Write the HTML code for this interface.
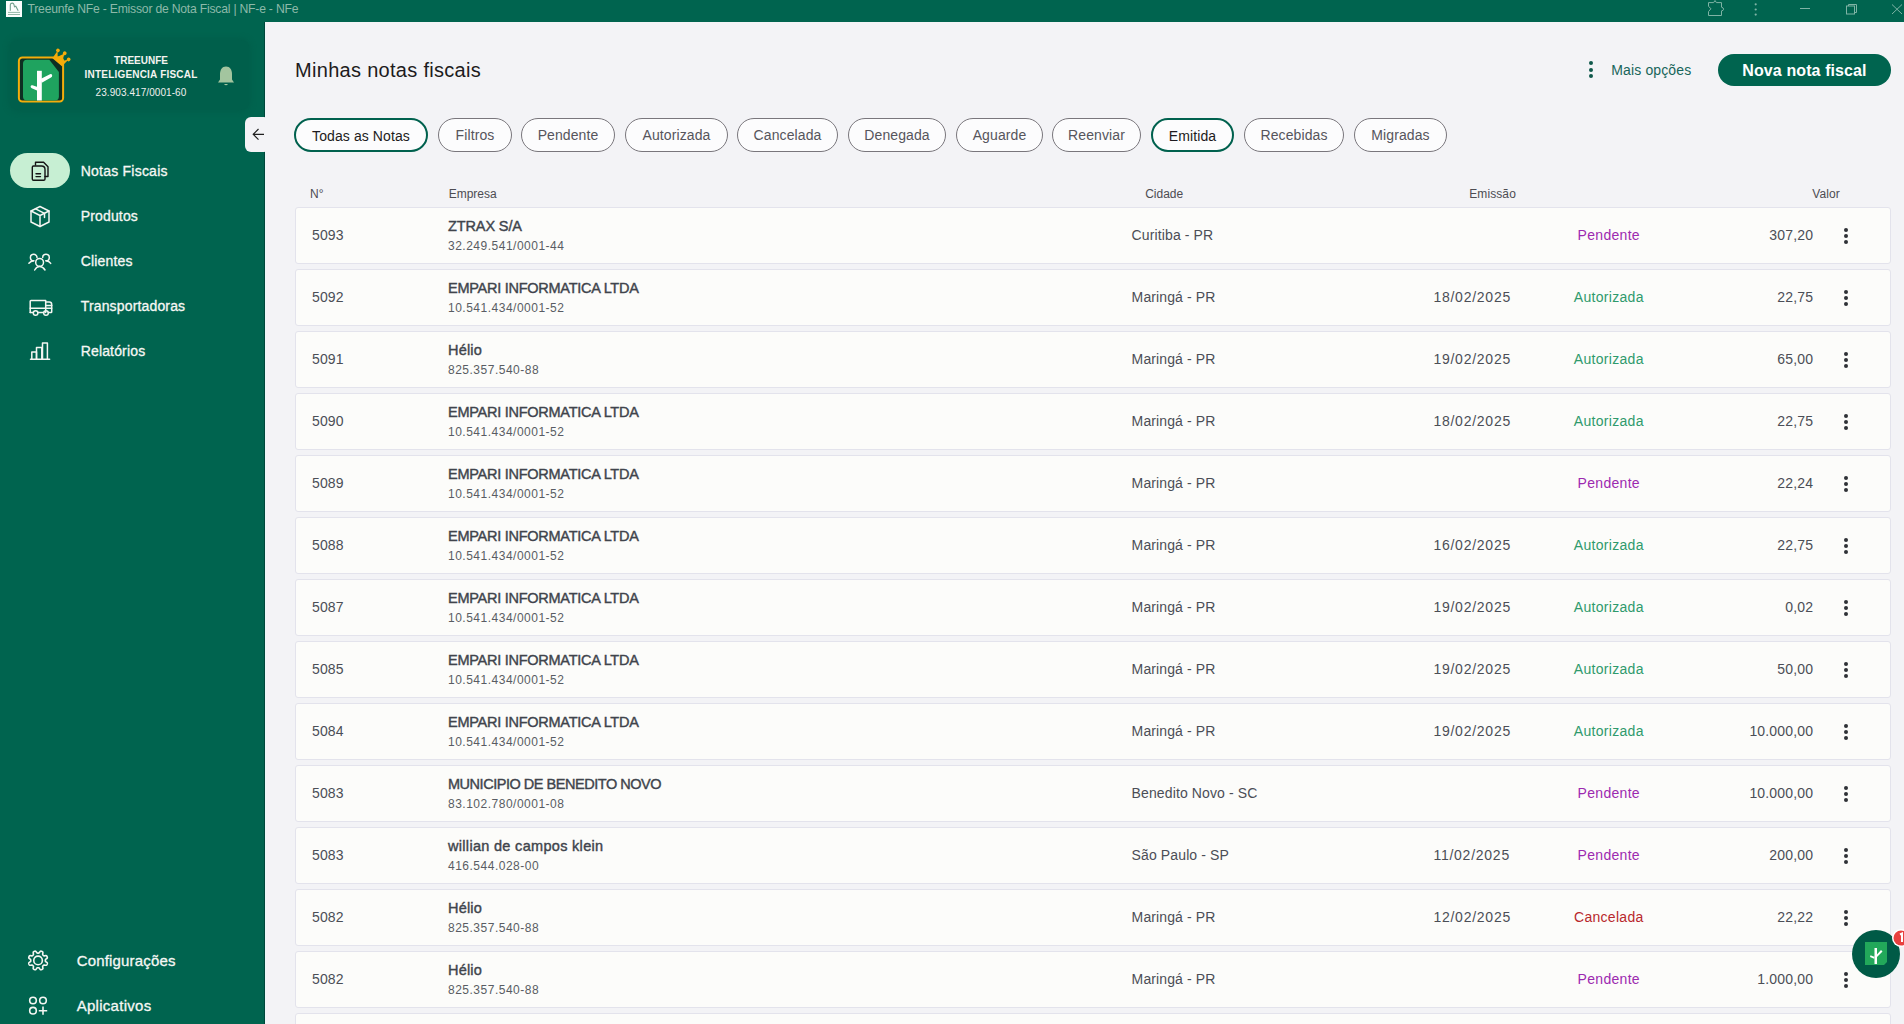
<!DOCTYPE html>
<html><head><meta charset="utf-8"><title>Treeunfe NFe</title>
<style>
*{margin:0;padding:0;box-sizing:border-box}
html,body{width:1904px;height:1024px;overflow:hidden;background:#f3f3f6;font-family:"Liberation Sans",sans-serif}
.t{position:absolute;white-space:pre}
.a{position:absolute}
.card{position:absolute;left:295px;width:1596px;height:57px;background:#fcfcfa;border:1px solid #e3e3ec;border-radius:3px}
.chip{position:absolute;top:118px;height:34px;border:1px solid #79767c;border-radius:17px;background:#fcfcfd}
.chip.sel{border:2px solid #00614e}
.dot{position:absolute;width:4px;height:4px;border-radius:2px;background:#2f3136}
</style></head><body>

<div class="a" style="left:0;top:0;width:1904px;height:22px;background:#00644f"></div>
<div class="a" style="left:0;top:22px;width:265px;height:1002px;background:#00644f"></div>
<div class="a" style="left:264px;top:22px;width:1px;height:1002px;background:#00463a"></div>
<div class="a" style="left:265px;top:22px;width:1px;height:1002px;background:#eaf9f9"></div>
<svg class="a" style="left:0;top:0" width="24" height="20" viewBox="0 0 24 20"><rect x="6" y="1" width="16" height="16" fill="#fbfdfc"/><path d="M10.3 10.8 V4.8 Q10.5 3.1 12.3 3.1 Q13.6 3.1 14 4.6 L14.5 6.8 L15.8 6.2 L18.2 10.8" stroke="#6f9e8c" stroke-width="1.1" fill="none"/><path d="M8 12.4 H20 M8 14.5 H20" stroke="#87ae9c" stroke-width="0.9"/></svg>
<div class="t" style="top:2.97px;font-size:12.2px;line-height:12.2px;font-weight:400;color:#8db9a9;letter-spacing:-0.22px;left:27.5px;">Treeunfe NFe - Emissor de Nota Fiscal | NF-e - NFe</div>
<svg class="a" style="left:1700px;top:0" width="204" height="22" viewBox="0 0 204 22">
<path d="M8.5 2.6 H13.6 L15 0.5 L16.4 2.6 H21.5 V7.2 Q23.6 7.6 23.6 9.2 Q23.6 10.6 21.5 10.9 V15.5 H8.5 V11.6 L10.9 8.8 L8.5 6.2 Z" fill="none" stroke="#7fb3a5" stroke-width="1"/>
<circle cx="55.7" cy="4.3" r="1.1" fill="#7fb3a5"/><circle cx="55.7" cy="9.5" r="1.1" fill="#7fb3a5"/><circle cx="55.7" cy="14.6" r="1.1" fill="#7fb3a5"/>
<path d="M100 8.5 H110" stroke="#7fb3a5" stroke-width="1"/>
<rect x="146.5" y="6" width="8" height="8" fill="none" stroke="#7fb3a5" stroke-width="1"/><path d="M148.5 6 V4.5 H156.5 V12.5 H154.5" fill="none" stroke="#7fb3a5" stroke-width="1"/>
<path d="M192 4.5 L202 14 M202 4.5 L192 14" stroke="#7fb3a5" stroke-width="1"/>
</svg>
<div class="a" style="left:10px;top:40px;width:239px;height:70px;border-radius:8px;background:#005f4b;box-shadow:0 0 5px 2px #005f4b"></div>
<svg class="a" style="left:10px;top:40px" width="70" height="70" viewBox="10 40 70 70">
<rect x="18.9" y="57.4" width="44.2" height="44.2" rx="3.5" fill="#0d2f22" stroke="#f3ad0c" stroke-width="2"/>
<path d="M27 59.8 H49.3 L58.9 72 V96.5 Q58.9 100.5 54.9 100.5 H27 Q23 100.5 23 96.5 V63.8 Q23 59.8 27 59.8 Z" fill="#1fa35f"/>
<path d="M37 70.8 H41.8 V100.5 H37 Z" fill="#fff"/>
<path d="M40.5 79 L50 74.2 Q51.8 73.5 52.2 75.5 Q52.3 76.8 51 77.5 L41.8 82.8 Z" fill="#fff"/>
<path d="M37.5 87 L32.5 85.2 Q30.8 84.8 30.6 86.6 Q30.6 87.8 31.8 88.3 L37.5 90.8 Z" fill="#fff"/>
<g transform="translate(63.3,54.9) rotate(40)" fill="#f5ac0a">
<path d="M-7 0.5 L-3.2 5 L0 -1.8 L3.2 5 L7 0.5 L6.2 9.5 L-6.2 9.5 Z"/>
<circle cx="-7" cy="0" r="1.9"/><circle cx="0" cy="-2.2" r="1.9"/><circle cx="7" cy="0" r="1.9"/>
</g>
</svg>
<div class="t" style="top:56.13px;font-size:10px;line-height:10px;font-weight:700;color:#f4f4f0;left:61.00px;width:160px;text-align:center;">TREEUNFE</div>
<div class="t" style="top:70.13px;font-size:10px;line-height:10px;font-weight:700;color:#f4f4f0;letter-spacing:0.2px;left:61.00px;width:160px;text-align:center;">INTELIGENCIA FISCAL</div>
<div class="t" style="top:87.53px;font-size:10px;line-height:10px;font-weight:400;color:#f0f0ee;letter-spacing:0.07px;left:61.00px;width:160px;text-align:center;">23.903.417/0001-60</div>
<svg class="a" style="left:217px;top:65px" width="18" height="22" viewBox="0 0 18 22">
<path d="M9 1.5 C5 1.5 3 5 3 9 V14.5 L1 17.5 H17 L15 14.5 V9 C15 5 13 1.5 9 1.5 Z" fill="#a3c59f"/>
<path d="M7 19 Q9 21.5 11 19 Z" fill="#a3c59f"/>
</svg>
<div class="a" style="left:245px;top:117px;width:25px;height:35px;border-radius:6px;background:#f3f3f6"></div>
<svg class="a" style="left:250px;top:126px" width="16" height="16" viewBox="0 0 16 16"><path d="M14 8.3 H3.2 M8.5 3 L3.2 8.3 L8.5 13.6" fill="none" stroke="#1f1f1f" stroke-width="1.15"/></svg>
<div class="a" style="left:10px;top:153px;width:60px;height:35px;border-radius:17.5px;background:#c7efd3"></div>
<div class="t" style="top:164.15px;font-size:14px;line-height:14px;font-weight:400;color:#f6f7f4;letter-spacing:0.23px;left:80.7px;-webkit-text-stroke:0.3px #f6f7f4">Notas Fiscais</div>
<div class="t" style="top:208.95px;font-size:14px;line-height:14px;font-weight:400;color:#f6f7f4;letter-spacing:0.16px;left:80.7px;-webkit-text-stroke:0.3px #f6f7f4">Produtos</div>
<div class="t" style="top:253.95px;font-size:14px;line-height:14px;font-weight:400;color:#f6f7f4;letter-spacing:0.16px;left:80.7px;-webkit-text-stroke:0.3px #f6f7f4">Clientes</div>
<div class="t" style="top:298.95px;font-size:14px;line-height:14px;font-weight:400;color:#f6f7f4;letter-spacing:0.16px;left:80.7px;-webkit-text-stroke:0.3px #f6f7f4">Transportadoras</div>
<div class="t" style="top:343.95px;font-size:14px;line-height:14px;font-weight:400;color:#f6f7f4;letter-spacing:0.16px;left:80.7px;-webkit-text-stroke:0.3px #f6f7f4">Relatórios</div>
<svg class="a" style="left:0;top:140px" width="80" height="240" viewBox="0 140 80 240" fill="none" stroke-linejoin="round" stroke-linecap="round">
<g stroke="#151515" stroke-width="1.4">
<path d="M35.5 165 V162.3 H43.6 L48 166.8 V176.5 H45"/>
<path d="M33.5 166 H41.5 Q45 166 45 169.5 V179 Q45 180.3 43.7 180.3 H33.5 Q32.3 180.3 32.3 179 V167.2 Q32.3 166 33.5 166 Z"/>
<path d="M36 173.8 H40.5 M36 176.6 H40.5"/>
</g>
<g stroke="#f4f6f2" stroke-width="1.5">
<path d="M40 206.5 L49 211 V222 L40 226.5 L31 222 V211 Z"/>
<path d="M31 211 L40 215.5 L49 211 M40 215.5 V226.5"/>
<path d="M35.5 208.8 L44.5 213.3 V217.5"/>
</g>
<g stroke="#f4f6f2" stroke-width="1.5">
<circle cx="39.6" cy="262.4" r="3.9"/>
<path d="M34.7 270 Q36.5 266.6 39.6 266.6 Q42.7 266.6 45 270"/>
<path d="M37 257.5 A3.3 3.3 0 1 0 33.7 260.8"/>
<path d="M28.9 263.2 Q30.8 261 33.7 260.8"/>
<path d="M42.7 257.5 A3.3 3.3 0 1 1 46 260.8"/>
<path d="M46 260.8 Q49 261 50.7 263.4"/>
</g>
<g stroke="#f4f6f2" stroke-width="1.5">
<path d="M30.2 312.6 V301.2 Q30.2 300.4 31 300.4 H45.7 V312.6"/>
<path d="M45.7 302 H49.4 Q51.7 302 51.7 304.4 V311.9 Q51.7 312.6 51 312.6 H48.4"/>
<path d="M30.2 308.3 H51.7 M45.7 305.5 H51.7"/>
<path d="M30.2 312.6 H33.3 M37.9 312.6 H43.7"/>
<circle cx="35.6" cy="313" r="2.3"/><circle cx="46" cy="313" r="2.3"/>
</g>
<g stroke="#f4f6f2" stroke-width="1.5">
<path d="M30.5 359.2 H49.6"/>
<path d="M31.8 359.2 V352 H36.5 V359.2"/>
<path d="M36.5 359.2 V347.6 H41.8 V359.2"/>
<path d="M42.5 359.2 V343 H47.4 V359.2"/>
</g>
</svg>
<div class="t" style="top:952.90px;font-size:15px;line-height:15px;font-weight:400;color:#f6f7f4;letter-spacing:0.17px;left:76.7px;-webkit-text-stroke:0.3px #f6f7f4">Configurações</div>
<div class="t" style="top:997.90px;font-size:15px;line-height:15px;font-weight:400;color:#f6f7f4;letter-spacing:0.28px;left:76.7px;-webkit-text-stroke:0.3px #f6f7f4">Aplicativos</div>
<svg class="a" style="left:20px;top:940px" width="40" height="84" viewBox="20 940 40 84" fill="none" stroke="#f4f6f2" stroke-width="1.6">
<circle cx="38.05" cy="960.45" r="4.3"/>
<path d="M45.35 960.45 L45.35 960.68 L45.36 960.91 L45.39 961.14 L45.48 961.39 L45.75 961.67 L46.28 962.02 L46.88 962.42 L47.24 962.81 L47.35 963.15 L47.33 963.47 L47.26 963.77 L47.16 964.06 L47.04 964.34 L46.91 964.62 L46.75 964.88 L46.54 965.12 L46.22 965.28 L45.69 965.30 L44.98 965.16 L44.35 965.03 L43.97 965.04 L43.73 965.15 L43.54 965.29 L43.37 965.45 L43.21 965.61 L43.05 965.77 L42.89 965.94 L42.75 966.13 L42.64 966.37 L42.63 966.75 L42.76 967.38 L42.90 968.09 L42.88 968.62 L42.72 968.94 L42.48 969.15 L42.22 969.31 L41.94 969.44 L41.66 969.56 L41.37 969.66 L41.07 969.73 L40.75 969.75 L40.41 969.64 L40.02 969.28 L39.62 968.68 L39.27 968.15 L38.99 967.88 L38.74 967.79 L38.51 967.76 L38.28 967.75 L38.05 967.75 L37.82 967.75 L37.59 967.76 L37.36 967.79 L37.11 967.88 L36.83 968.15 L36.48 968.68 L36.08 969.28 L35.69 969.64 L35.35 969.75 L35.03 969.73 L34.73 969.66 L34.44 969.56 L34.16 969.44 L33.88 969.31 L33.62 969.15 L33.38 968.94 L33.22 968.62 L33.20 968.09 L33.34 967.38 L33.47 966.75 L33.46 966.37 L33.35 966.13 L33.21 965.94 L33.05 965.77 L32.89 965.61 L32.73 965.45 L32.56 965.29 L32.37 965.15 L32.13 965.04 L31.75 965.03 L31.12 965.16 L30.41 965.30 L29.88 965.28 L29.56 965.12 L29.35 964.88 L29.19 964.62 L29.06 964.34 L28.94 964.06 L28.84 963.77 L28.77 963.47 L28.75 963.15 L28.86 962.81 L29.22 962.42 L29.82 962.02 L30.35 961.67 L30.62 961.39 L30.71 961.14 L30.74 960.91 L30.75 960.68 L30.75 960.45 L30.75 960.22 L30.74 959.99 L30.71 959.76 L30.62 959.51 L30.35 959.23 L29.82 958.88 L29.22 958.48 L28.86 958.09 L28.75 957.75 L28.77 957.43 L28.84 957.13 L28.94 956.84 L29.06 956.56 L29.19 956.28 L29.35 956.02 L29.56 955.78 L29.88 955.62 L30.41 955.60 L31.12 955.74 L31.75 955.87 L32.13 955.86 L32.37 955.75 L32.56 955.61 L32.73 955.45 L32.89 955.29 L33.05 955.13 L33.21 954.96 L33.35 954.77 L33.46 954.53 L33.47 954.15 L33.34 953.52 L33.20 952.81 L33.22 952.28 L33.38 951.96 L33.62 951.75 L33.88 951.59 L34.16 951.46 L34.44 951.34 L34.73 951.24 L35.03 951.17 L35.35 951.15 L35.69 951.26 L36.08 951.62 L36.48 952.22 L36.83 952.75 L37.11 953.02 L37.36 953.11 L37.59 953.14 L37.82 953.15 L38.05 953.15 L38.28 953.15 L38.51 953.14 L38.74 953.11 L38.99 953.02 L39.27 952.75 L39.62 952.22 L40.02 951.62 L40.41 951.26 L40.75 951.15 L41.07 951.17 L41.37 951.24 L41.66 951.34 L41.94 951.46 L42.22 951.59 L42.48 951.75 L42.72 951.96 L42.88 952.28 L42.90 952.81 L42.76 953.52 L42.63 954.15 L42.64 954.53 L42.75 954.77 L42.89 954.96 L43.05 955.13 L43.21 955.29 L43.37 955.45 L43.54 955.61 L43.73 955.75 L43.97 955.86 L44.35 955.87 L44.98 955.74 L45.69 955.60 L46.22 955.62 L46.54 955.78 L46.75 956.02 L46.91 956.28 L47.04 956.56 L47.16 956.84 L47.26 957.13 L47.33 957.43 L47.35 957.75 L47.24 958.09 L46.88 958.48 L46.28 958.88 L45.75 959.23 L45.48 959.51 L45.39 959.76 L45.36 959.99 L45.35 960.22 Z" stroke-linejoin="round"/>
<circle cx="33" cy="1000.5" r="3.3"/><circle cx="43" cy="1000.5" r="3.3"/><circle cx="33" cy="1010.7" r="3.3"/>
<path d="M43 1006.5 V1014.8 M38.8 1010.7 H47.2"/>
</svg>
<div class="t" style="top:60.07px;font-size:20px;line-height:20px;font-weight:400;color:#1d1b20;letter-spacing:0.3px;left:295px;">Minhas notas fiscais</div>
<div class="dot" style="left:1588.5px;top:61.1px;background:#10594b"></div>
<div class="dot" style="left:1588.5px;top:67.7px;background:#10594b"></div>
<div class="dot" style="left:1588.5px;top:74.1px;background:#10594b"></div>
<div class="t" style="top:62.85px;font-size:14px;line-height:14px;font-weight:400;color:#17655a;letter-spacing:0.13px;left:1611.3px;">Mais opções</div>
<div class="a" style="left:1718px;top:54px;width:173px;height:32px;border-radius:16px;background:#00644f"></div>
<div class="t" style="top:63.06px;font-size:16px;line-height:16px;font-weight:700;color:#ffffff;letter-spacing:0.1px;left:1718.00px;width:173px;text-align:center;">Nova nota fiscal</div>
<div class="chip sel" style="left:294px;width:134px"></div>
<div class="t" style="top:128.65px;font-size:14px;line-height:14px;font-weight:400;color:#1d1b20;letter-spacing:0.1px;left:294.00px;width:134px;text-align:center;">Todas as Notas</div>
<div class="chip" style="left:438px;width:74px"></div>
<div class="t" style="top:127.85px;font-size:14px;line-height:14px;font-weight:400;color:#56555c;letter-spacing:0.1px;left:438.00px;width:74px;text-align:center;">Filtros</div>
<div class="chip" style="left:521px;width:94px"></div>
<div class="t" style="top:127.85px;font-size:14px;line-height:14px;font-weight:400;color:#56555c;letter-spacing:0.1px;left:521.00px;width:94px;text-align:center;">Pendente</div>
<div class="chip" style="left:625px;width:103px"></div>
<div class="t" style="top:127.85px;font-size:14px;line-height:14px;font-weight:400;color:#56555c;letter-spacing:0.1px;left:625.00px;width:103px;text-align:center;">Autorizada</div>
<div class="chip" style="left:737px;width:101px"></div>
<div class="t" style="top:127.85px;font-size:14px;line-height:14px;font-weight:400;color:#56555c;letter-spacing:0.1px;left:737.00px;width:101px;text-align:center;">Cancelada</div>
<div class="chip" style="left:848px;width:98px"></div>
<div class="t" style="top:127.85px;font-size:14px;line-height:14px;font-weight:400;color:#56555c;letter-spacing:0.1px;left:848.00px;width:98px;text-align:center;">Denegada</div>
<div class="chip" style="left:956px;width:87px"></div>
<div class="t" style="top:127.85px;font-size:14px;line-height:14px;font-weight:400;color:#56555c;letter-spacing:0.1px;left:956.00px;width:87px;text-align:center;">Aguarde</div>
<div class="chip" style="left:1052px;width:89px"></div>
<div class="t" style="top:127.85px;font-size:14px;line-height:14px;font-weight:400;color:#56555c;letter-spacing:0.1px;left:1052.00px;width:89px;text-align:center;">Reenviar</div>
<div class="chip sel" style="left:1151px;width:83px"></div>
<div class="t" style="top:128.65px;font-size:14px;line-height:14px;font-weight:400;color:#1d1b20;letter-spacing:0.1px;left:1151.00px;width:83px;text-align:center;">Emitida</div>
<div class="chip" style="left:1244px;width:100px"></div>
<div class="t" style="top:127.85px;font-size:14px;line-height:14px;font-weight:400;color:#56555c;letter-spacing:0.1px;left:1244.00px;width:100px;text-align:center;">Recebidas</div>
<div class="chip" style="left:1354px;width:93px"></div>
<div class="t" style="top:127.85px;font-size:14px;line-height:14px;font-weight:400;color:#56555c;letter-spacing:0.1px;left:1354.00px;width:93px;text-align:center;">Migradas</div>
<div class="t" style="top:187.74px;font-size:12px;line-height:12px;font-weight:400;color:#4d4c52;left:310px;">N°</div>
<div class="t" style="top:187.74px;font-size:12px;line-height:12px;font-weight:400;color:#4d4c52;left:448.7px;">Empresa</div>
<div class="t" style="top:187.74px;font-size:12px;line-height:12px;font-weight:400;color:#4d4c52;left:1145.2px;">Cidade</div>
<div class="t" style="top:187.74px;font-size:12px;line-height:12px;font-weight:400;color:#4d4c52;letter-spacing:0.1px;left:1469.2px;">Emissão</div>
<div class="t" style="top:187.74px;font-size:12px;line-height:12px;font-weight:400;color:#4d4c52;letter-spacing:0.1px;right:64.20000000000005px;text-align:right;">Valor</div>
<div class="card" style="top:207px"></div>
<div class="t" style="top:227.85px;font-size:14px;line-height:14px;font-weight:400;color:#4b4e56;letter-spacing:0.1px;left:312px;">5093</div>
<div class="t" style="top:218.53px;font-size:14.5px;line-height:14.5px;font-weight:400;color:#40444c;letter-spacing:-0.12px;left:448px;-webkit-text-stroke:0.4px #40444c">ZTRAX S/A</div>
<div class="t" style="top:239.74px;font-size:12px;line-height:12px;font-weight:400;color:#595c63;letter-spacing:0.5px;left:448px;">32.249.541/0001-44</div>
<div class="t" style="top:227.95px;font-size:14px;line-height:14px;font-weight:400;color:#4b4e56;letter-spacing:0.12px;left:1131.6px;">Curitiba - PR</div>
<div class="t" style="top:227.95px;font-size:14px;line-height:14px;font-weight:400;color:#9c2ab0;letter-spacing:0.3px;left:1538.80px;width:140px;text-align:center;">Pendente</div>
<div class="t" style="top:227.95px;font-size:14px;line-height:14px;font-weight:400;color:#4b4e56;letter-spacing:0.17px;right:90.79999999999995px;text-align:right;">307,20</div>
<div class="dot" style="left:1844px;top:228px"></div>
<div class="dot" style="left:1844px;top:234px"></div>
<div class="dot" style="left:1844px;top:240px"></div>
<div class="card" style="top:269px"></div>
<div class="t" style="top:289.85px;font-size:14px;line-height:14px;font-weight:400;color:#4b4e56;letter-spacing:0.1px;left:312px;">5092</div>
<div class="t" style="top:280.53px;font-size:14.5px;line-height:14.5px;font-weight:400;color:#40444c;letter-spacing:-0.26px;left:448px;-webkit-text-stroke:0.4px #40444c">EMPARI INFORMATICA LTDA</div>
<div class="t" style="top:301.74px;font-size:12px;line-height:12px;font-weight:400;color:#595c63;letter-spacing:0.5px;left:448px;">10.541.434/0001-52</div>
<div class="t" style="top:289.95px;font-size:14px;line-height:14px;font-weight:400;color:#4b4e56;letter-spacing:0.12px;left:1131.6px;">Maringá - PR</div>
<div class="t" style="top:289.95px;font-size:14px;line-height:14px;font-weight:400;color:#4b4e56;letter-spacing:0.75px;left:1433.4px;">18/02/2025</div>
<div class="t" style="top:289.95px;font-size:14px;line-height:14px;font-weight:400;color:#2f9a6c;letter-spacing:0.3px;left:1538.80px;width:140px;text-align:center;">Autorizada</div>
<div class="t" style="top:289.95px;font-size:14px;line-height:14px;font-weight:400;color:#4b4e56;letter-spacing:0.17px;right:90.79999999999995px;text-align:right;">22,75</div>
<div class="dot" style="left:1844px;top:290px"></div>
<div class="dot" style="left:1844px;top:296px"></div>
<div class="dot" style="left:1844px;top:302px"></div>
<div class="card" style="top:331px"></div>
<div class="t" style="top:351.85px;font-size:14px;line-height:14px;font-weight:400;color:#4b4e56;letter-spacing:0.1px;left:312px;">5091</div>
<div class="t" style="top:342.53px;font-size:14.5px;line-height:14.5px;font-weight:400;color:#40444c;letter-spacing:0.2px;left:448px;-webkit-text-stroke:0.4px #40444c">Hélio</div>
<div class="t" style="top:363.74px;font-size:12px;line-height:12px;font-weight:400;color:#595c63;letter-spacing:0.5px;left:448px;">825.357.540-88</div>
<div class="t" style="top:351.95px;font-size:14px;line-height:14px;font-weight:400;color:#4b4e56;letter-spacing:0.12px;left:1131.6px;">Maringá - PR</div>
<div class="t" style="top:351.95px;font-size:14px;line-height:14px;font-weight:400;color:#4b4e56;letter-spacing:0.75px;left:1433.4px;">19/02/2025</div>
<div class="t" style="top:351.95px;font-size:14px;line-height:14px;font-weight:400;color:#2f9a6c;letter-spacing:0.3px;left:1538.80px;width:140px;text-align:center;">Autorizada</div>
<div class="t" style="top:351.95px;font-size:14px;line-height:14px;font-weight:400;color:#4b4e56;letter-spacing:0.17px;right:90.79999999999995px;text-align:right;">65,00</div>
<div class="dot" style="left:1844px;top:352px"></div>
<div class="dot" style="left:1844px;top:358px"></div>
<div class="dot" style="left:1844px;top:364px"></div>
<div class="card" style="top:393px"></div>
<div class="t" style="top:413.85px;font-size:14px;line-height:14px;font-weight:400;color:#4b4e56;letter-spacing:0.1px;left:312px;">5090</div>
<div class="t" style="top:404.53px;font-size:14.5px;line-height:14.5px;font-weight:400;color:#40444c;letter-spacing:-0.26px;left:448px;-webkit-text-stroke:0.4px #40444c">EMPARI INFORMATICA LTDA</div>
<div class="t" style="top:425.74px;font-size:12px;line-height:12px;font-weight:400;color:#595c63;letter-spacing:0.5px;left:448px;">10.541.434/0001-52</div>
<div class="t" style="top:413.95px;font-size:14px;line-height:14px;font-weight:400;color:#4b4e56;letter-spacing:0.12px;left:1131.6px;">Maringá - PR</div>
<div class="t" style="top:413.95px;font-size:14px;line-height:14px;font-weight:400;color:#4b4e56;letter-spacing:0.75px;left:1433.4px;">18/02/2025</div>
<div class="t" style="top:413.95px;font-size:14px;line-height:14px;font-weight:400;color:#2f9a6c;letter-spacing:0.3px;left:1538.80px;width:140px;text-align:center;">Autorizada</div>
<div class="t" style="top:413.95px;font-size:14px;line-height:14px;font-weight:400;color:#4b4e56;letter-spacing:0.17px;right:90.79999999999995px;text-align:right;">22,75</div>
<div class="dot" style="left:1844px;top:414px"></div>
<div class="dot" style="left:1844px;top:420px"></div>
<div class="dot" style="left:1844px;top:426px"></div>
<div class="card" style="top:455px"></div>
<div class="t" style="top:475.85px;font-size:14px;line-height:14px;font-weight:400;color:#4b4e56;letter-spacing:0.1px;left:312px;">5089</div>
<div class="t" style="top:466.53px;font-size:14.5px;line-height:14.5px;font-weight:400;color:#40444c;letter-spacing:-0.26px;left:448px;-webkit-text-stroke:0.4px #40444c">EMPARI INFORMATICA LTDA</div>
<div class="t" style="top:487.74px;font-size:12px;line-height:12px;font-weight:400;color:#595c63;letter-spacing:0.5px;left:448px;">10.541.434/0001-52</div>
<div class="t" style="top:475.95px;font-size:14px;line-height:14px;font-weight:400;color:#4b4e56;letter-spacing:0.12px;left:1131.6px;">Maringá - PR</div>
<div class="t" style="top:475.95px;font-size:14px;line-height:14px;font-weight:400;color:#9c2ab0;letter-spacing:0.3px;left:1538.80px;width:140px;text-align:center;">Pendente</div>
<div class="t" style="top:475.95px;font-size:14px;line-height:14px;font-weight:400;color:#4b4e56;letter-spacing:0.17px;right:90.79999999999995px;text-align:right;">22,24</div>
<div class="dot" style="left:1844px;top:476px"></div>
<div class="dot" style="left:1844px;top:482px"></div>
<div class="dot" style="left:1844px;top:488px"></div>
<div class="card" style="top:517px"></div>
<div class="t" style="top:537.85px;font-size:14px;line-height:14px;font-weight:400;color:#4b4e56;letter-spacing:0.1px;left:312px;">5088</div>
<div class="t" style="top:528.53px;font-size:14.5px;line-height:14.5px;font-weight:400;color:#40444c;letter-spacing:-0.26px;left:448px;-webkit-text-stroke:0.4px #40444c">EMPARI INFORMATICA LTDA</div>
<div class="t" style="top:549.74px;font-size:12px;line-height:12px;font-weight:400;color:#595c63;letter-spacing:0.5px;left:448px;">10.541.434/0001-52</div>
<div class="t" style="top:537.95px;font-size:14px;line-height:14px;font-weight:400;color:#4b4e56;letter-spacing:0.12px;left:1131.6px;">Maringá - PR</div>
<div class="t" style="top:537.95px;font-size:14px;line-height:14px;font-weight:400;color:#4b4e56;letter-spacing:0.75px;left:1433.4px;">16/02/2025</div>
<div class="t" style="top:537.95px;font-size:14px;line-height:14px;font-weight:400;color:#2f9a6c;letter-spacing:0.3px;left:1538.80px;width:140px;text-align:center;">Autorizada</div>
<div class="t" style="top:537.95px;font-size:14px;line-height:14px;font-weight:400;color:#4b4e56;letter-spacing:0.17px;right:90.79999999999995px;text-align:right;">22,75</div>
<div class="dot" style="left:1844px;top:538px"></div>
<div class="dot" style="left:1844px;top:544px"></div>
<div class="dot" style="left:1844px;top:550px"></div>
<div class="card" style="top:579px"></div>
<div class="t" style="top:599.85px;font-size:14px;line-height:14px;font-weight:400;color:#4b4e56;letter-spacing:0.1px;left:312px;">5087</div>
<div class="t" style="top:590.53px;font-size:14.5px;line-height:14.5px;font-weight:400;color:#40444c;letter-spacing:-0.26px;left:448px;-webkit-text-stroke:0.4px #40444c">EMPARI INFORMATICA LTDA</div>
<div class="t" style="top:611.74px;font-size:12px;line-height:12px;font-weight:400;color:#595c63;letter-spacing:0.5px;left:448px;">10.541.434/0001-52</div>
<div class="t" style="top:599.95px;font-size:14px;line-height:14px;font-weight:400;color:#4b4e56;letter-spacing:0.12px;left:1131.6px;">Maringá - PR</div>
<div class="t" style="top:599.95px;font-size:14px;line-height:14px;font-weight:400;color:#4b4e56;letter-spacing:0.75px;left:1433.4px;">19/02/2025</div>
<div class="t" style="top:599.95px;font-size:14px;line-height:14px;font-weight:400;color:#2f9a6c;letter-spacing:0.3px;left:1538.80px;width:140px;text-align:center;">Autorizada</div>
<div class="t" style="top:599.95px;font-size:14px;line-height:14px;font-weight:400;color:#4b4e56;letter-spacing:0.17px;right:90.79999999999995px;text-align:right;">0,02</div>
<div class="dot" style="left:1844px;top:600px"></div>
<div class="dot" style="left:1844px;top:606px"></div>
<div class="dot" style="left:1844px;top:612px"></div>
<div class="card" style="top:641px"></div>
<div class="t" style="top:661.85px;font-size:14px;line-height:14px;font-weight:400;color:#4b4e56;letter-spacing:0.1px;left:312px;">5085</div>
<div class="t" style="top:652.53px;font-size:14.5px;line-height:14.5px;font-weight:400;color:#40444c;letter-spacing:-0.26px;left:448px;-webkit-text-stroke:0.4px #40444c">EMPARI INFORMATICA LTDA</div>
<div class="t" style="top:673.74px;font-size:12px;line-height:12px;font-weight:400;color:#595c63;letter-spacing:0.5px;left:448px;">10.541.434/0001-52</div>
<div class="t" style="top:661.95px;font-size:14px;line-height:14px;font-weight:400;color:#4b4e56;letter-spacing:0.12px;left:1131.6px;">Maringá - PR</div>
<div class="t" style="top:661.95px;font-size:14px;line-height:14px;font-weight:400;color:#4b4e56;letter-spacing:0.75px;left:1433.4px;">19/02/2025</div>
<div class="t" style="top:661.95px;font-size:14px;line-height:14px;font-weight:400;color:#2f9a6c;letter-spacing:0.3px;left:1538.80px;width:140px;text-align:center;">Autorizada</div>
<div class="t" style="top:661.95px;font-size:14px;line-height:14px;font-weight:400;color:#4b4e56;letter-spacing:0.17px;right:90.79999999999995px;text-align:right;">50,00</div>
<div class="dot" style="left:1844px;top:662px"></div>
<div class="dot" style="left:1844px;top:668px"></div>
<div class="dot" style="left:1844px;top:674px"></div>
<div class="card" style="top:703px"></div>
<div class="t" style="top:723.85px;font-size:14px;line-height:14px;font-weight:400;color:#4b4e56;letter-spacing:0.1px;left:312px;">5084</div>
<div class="t" style="top:714.53px;font-size:14.5px;line-height:14.5px;font-weight:400;color:#40444c;letter-spacing:-0.26px;left:448px;-webkit-text-stroke:0.4px #40444c">EMPARI INFORMATICA LTDA</div>
<div class="t" style="top:735.74px;font-size:12px;line-height:12px;font-weight:400;color:#595c63;letter-spacing:0.5px;left:448px;">10.541.434/0001-52</div>
<div class="t" style="top:723.95px;font-size:14px;line-height:14px;font-weight:400;color:#4b4e56;letter-spacing:0.12px;left:1131.6px;">Maringá - PR</div>
<div class="t" style="top:723.95px;font-size:14px;line-height:14px;font-weight:400;color:#4b4e56;letter-spacing:0.75px;left:1433.4px;">19/02/2025</div>
<div class="t" style="top:723.95px;font-size:14px;line-height:14px;font-weight:400;color:#2f9a6c;letter-spacing:0.3px;left:1538.80px;width:140px;text-align:center;">Autorizada</div>
<div class="t" style="top:723.95px;font-size:14px;line-height:14px;font-weight:400;color:#4b4e56;letter-spacing:0.17px;right:90.79999999999995px;text-align:right;">10.000,00</div>
<div class="dot" style="left:1844px;top:724px"></div>
<div class="dot" style="left:1844px;top:730px"></div>
<div class="dot" style="left:1844px;top:736px"></div>
<div class="card" style="top:765px"></div>
<div class="t" style="top:785.85px;font-size:14px;line-height:14px;font-weight:400;color:#4b4e56;letter-spacing:0.1px;left:312px;">5083</div>
<div class="t" style="top:776.53px;font-size:14.5px;line-height:14.5px;font-weight:400;color:#40444c;letter-spacing:-0.47px;left:448px;-webkit-text-stroke:0.4px #40444c">MUNICIPIO DE BENEDITO NOVO</div>
<div class="t" style="top:797.74px;font-size:12px;line-height:12px;font-weight:400;color:#595c63;letter-spacing:0.5px;left:448px;">83.102.780/0001-08</div>
<div class="t" style="top:785.95px;font-size:14px;line-height:14px;font-weight:400;color:#4b4e56;letter-spacing:0.12px;left:1131.6px;">Benedito Novo - SC</div>
<div class="t" style="top:785.95px;font-size:14px;line-height:14px;font-weight:400;color:#9c2ab0;letter-spacing:0.3px;left:1538.80px;width:140px;text-align:center;">Pendente</div>
<div class="t" style="top:785.95px;font-size:14px;line-height:14px;font-weight:400;color:#4b4e56;letter-spacing:0.17px;right:90.79999999999995px;text-align:right;">10.000,00</div>
<div class="dot" style="left:1844px;top:786px"></div>
<div class="dot" style="left:1844px;top:792px"></div>
<div class="dot" style="left:1844px;top:798px"></div>
<div class="card" style="top:827px"></div>
<div class="t" style="top:847.85px;font-size:14px;line-height:14px;font-weight:400;color:#4b4e56;letter-spacing:0.1px;left:312px;">5083</div>
<div class="t" style="top:838.53px;font-size:14.5px;line-height:14.5px;font-weight:400;color:#40444c;letter-spacing:0.31px;left:448px;-webkit-text-stroke:0.4px #40444c">willian de campos klein</div>
<div class="t" style="top:859.74px;font-size:12px;line-height:12px;font-weight:400;color:#595c63;letter-spacing:0.5px;left:448px;">416.544.028-00</div>
<div class="t" style="top:847.95px;font-size:14px;line-height:14px;font-weight:400;color:#4b4e56;letter-spacing:0.12px;left:1131.6px;">São Paulo - SP</div>
<div class="t" style="top:847.95px;font-size:14px;line-height:14px;font-weight:400;color:#4b4e56;letter-spacing:0.75px;left:1433.4px;">11/02/2025</div>
<div class="t" style="top:847.95px;font-size:14px;line-height:14px;font-weight:400;color:#9c2ab0;letter-spacing:0.3px;left:1538.80px;width:140px;text-align:center;">Pendente</div>
<div class="t" style="top:847.95px;font-size:14px;line-height:14px;font-weight:400;color:#4b4e56;letter-spacing:0.17px;right:90.79999999999995px;text-align:right;">200,00</div>
<div class="dot" style="left:1844px;top:848px"></div>
<div class="dot" style="left:1844px;top:854px"></div>
<div class="dot" style="left:1844px;top:860px"></div>
<div class="card" style="top:889px"></div>
<div class="t" style="top:909.85px;font-size:14px;line-height:14px;font-weight:400;color:#4b4e56;letter-spacing:0.1px;left:312px;">5082</div>
<div class="t" style="top:900.53px;font-size:14.5px;line-height:14.5px;font-weight:400;color:#40444c;letter-spacing:0.2px;left:448px;-webkit-text-stroke:0.4px #40444c">Hélio</div>
<div class="t" style="top:921.74px;font-size:12px;line-height:12px;font-weight:400;color:#595c63;letter-spacing:0.5px;left:448px;">825.357.540-88</div>
<div class="t" style="top:909.95px;font-size:14px;line-height:14px;font-weight:400;color:#4b4e56;letter-spacing:0.12px;left:1131.6px;">Maringá - PR</div>
<div class="t" style="top:909.95px;font-size:14px;line-height:14px;font-weight:400;color:#4b4e56;letter-spacing:0.75px;left:1433.4px;">12/02/2025</div>
<div class="t" style="top:909.95px;font-size:14px;line-height:14px;font-weight:400;color:#b8282c;letter-spacing:0.3px;left:1538.80px;width:140px;text-align:center;">Cancelada</div>
<div class="t" style="top:909.95px;font-size:14px;line-height:14px;font-weight:400;color:#4b4e56;letter-spacing:0.17px;right:90.79999999999995px;text-align:right;">22,22</div>
<div class="dot" style="left:1844px;top:910px"></div>
<div class="dot" style="left:1844px;top:916px"></div>
<div class="dot" style="left:1844px;top:922px"></div>
<div class="card" style="top:951px"></div>
<div class="t" style="top:971.85px;font-size:14px;line-height:14px;font-weight:400;color:#4b4e56;letter-spacing:0.1px;left:312px;">5082</div>
<div class="t" style="top:962.53px;font-size:14.5px;line-height:14.5px;font-weight:400;color:#40444c;letter-spacing:0.2px;left:448px;-webkit-text-stroke:0.4px #40444c">Hélio</div>
<div class="t" style="top:983.74px;font-size:12px;line-height:12px;font-weight:400;color:#595c63;letter-spacing:0.5px;left:448px;">825.357.540-88</div>
<div class="t" style="top:971.95px;font-size:14px;line-height:14px;font-weight:400;color:#4b4e56;letter-spacing:0.12px;left:1131.6px;">Maringá - PR</div>
<div class="t" style="top:971.95px;font-size:14px;line-height:14px;font-weight:400;color:#9c2ab0;letter-spacing:0.3px;left:1538.80px;width:140px;text-align:center;">Pendente</div>
<div class="t" style="top:971.95px;font-size:14px;line-height:14px;font-weight:400;color:#4b4e56;letter-spacing:0.17px;right:90.79999999999995px;text-align:right;">1.000,00</div>
<div class="dot" style="left:1844px;top:972px"></div>
<div class="dot" style="left:1844px;top:978px"></div>
<div class="dot" style="left:1844px;top:984px"></div>
<div class="card" style="top:1013px"></div>
<div class="t" style="top:1033.85px;font-size:14px;line-height:14px;font-weight:400;color:#4b4e56;letter-spacing:0.1px;left:312px;">5081</div>
<div class="t" style="top:1024.53px;font-size:14.5px;line-height:14.5px;font-weight:400;color:#40444c;letter-spacing:-0.26px;left:448px;-webkit-text-stroke:0.4px #40444c">EMPARI INFORMATICA LTDA</div>
<div class="t" style="top:1045.74px;font-size:12px;line-height:12px;font-weight:400;color:#595c63;letter-spacing:0.5px;left:448px;">10.541.434/0001-52</div>
<div class="t" style="top:1033.95px;font-size:14px;line-height:14px;font-weight:400;color:#4b4e56;letter-spacing:0.12px;left:1131.6px;">Maringá - PR</div>
<div class="t" style="top:1033.95px;font-size:14px;line-height:14px;font-weight:400;color:#9c2ab0;letter-spacing:0.3px;left:1538.80px;width:140px;text-align:center;">Pendente</div>
<div class="t" style="top:1033.95px;font-size:14px;line-height:14px;font-weight:400;color:#4b4e56;letter-spacing:0.17px;right:90.79999999999995px;text-align:right;">22,75</div>
<div class="dot" style="left:1844px;top:1034px"></div>
<div class="dot" style="left:1844px;top:1040px"></div>
<div class="dot" style="left:1844px;top:1046px"></div>
<svg class="a" style="left:1850px;top:926px" width="54" height="56" viewBox="1850 926 54 56">
<circle cx="1876" cy="954" r="24" fill="#005a46"/>
<path d="M1865 942 H1887 V962 L1884 965 H1865 Z" fill="#22a85a"/>
<path d="M1874.5 948 H1877 V964 H1874.5 Z M1876.5 955 L1881 950 L1882.5 951.5 L1877 957 Z M1874.8 957 L1870.5 955.3 L1870 957 L1874.8 959 Z" fill="#fff"/>
<circle cx="1901" cy="938" r="9" fill="#fff"/>
<circle cx="1901" cy="938" r="7.5" fill="#e8403f"/>
<path d="M1900 934.5 L1902 933.5 V942" stroke="#fff" stroke-width="2" fill="none"/>
</svg>
</body></html>
